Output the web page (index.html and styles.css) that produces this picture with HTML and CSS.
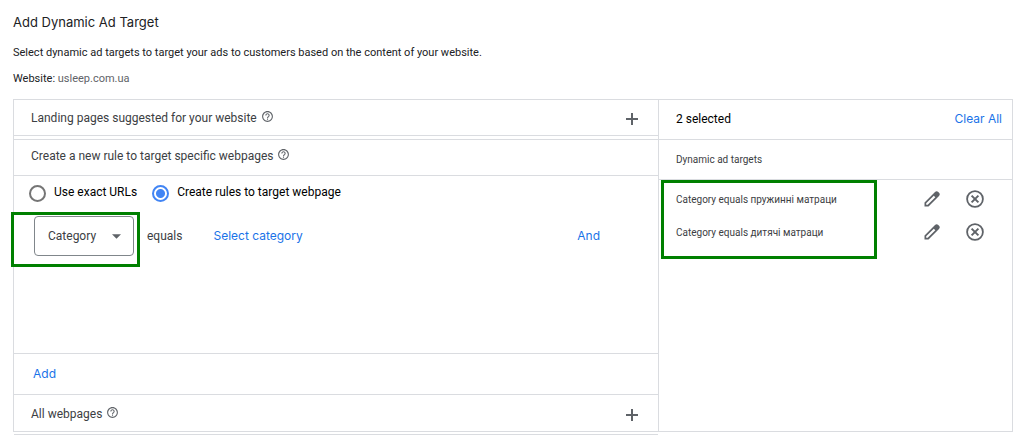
FILE: index.html
```html
<!DOCTYPE html>
<html lang="en">
<head>
<meta charset="utf-8">
<meta name="viewport" content="width=device-width, initial-scale=1">
<title>Add Dynamic Ad Target</title>
<link rel="stylesheet" href="styles.css">
</head>
<body>
<svg class="sprite" aria-hidden="true">
  <symbol id="help" viewBox="0 0 24 24"><path d="M11 18h2v-2h-2v2zm1-16C6.480 2 2 6.480 2 12s4.480 10 10 10 10-4.480 10-10S17.520 2 12 2zm0 18c-4.410 0-8-3.590-8-8s3.590-8 8-8 8 3.590 8 8-3.590 8-8 8zm0-14c-2.210 0-4 1.790-4 4h2c0-1.100.9-2 2-2s2 .9 2 2c0 2-3 1.750-3 5h2c0-2.250 3-2.500 3-5 0-2.210-1.790-4-4-4z"/></symbol>
  <symbol id="plus" viewBox="0 0 12 12"><path d="M5 0h2v5h5v2H7v5H5V7H0V5h5z"/></symbol>
  <symbol id="pencil" viewBox="0 0 16 16"><path fill-rule="evenodd" d="M11 1a2.400 2.400 0 0 1 3.300 0l.7.7a2.400 2.400 0 0 1 0 3.300L4.500 15.500H.5v-4zM9.800 4.700 2.200 12.300v1.500h1.500l7.600-7.600z"/></symbol>
  <symbol id="remove" viewBox="0 0 18 18"><circle cx="9" cy="9" r="7.900" fill="none" stroke="currentColor" stroke-width="1.800"/><path d="m5.600 5.600 6.800 6.800m0-6.800-6.800 6.800" fill="none" stroke="currentColor" stroke-width="2"/></symbol>
</svg>
<main class="page">
  <h1 class="title">Add Dynamic Ad Target</h1>
  <p class="intro">Select dynamic ad targets to target your ads to customers based on the content of your website.</p>
  <p class="intro">Website: <span class="site">usleep.com.ua</span></p>
  <div class="picker">
    <div class="sources">
      <section class="row">
        <h2 class="label">Landing pages suggested for your website</h2>
        <svg class="help"><use href="#help"/></svg>
        <button class="expand" aria-label="Expand landing pages"><svg class="plus"><use href="#plus"/></svg></button>
      </section>
      <section class="rule">
        <div class="row rule-head">
          <h2 class="label">Create a new rule to target specific webpages</h2>
          <svg class="help"><use href="#help"/></svg>
        </div>
        <div class="rule-body">
          <div class="options">
            <label class="option"><input class="radio" type="radio" name="mode"><span class="option-text">Use exact URLs</span></label>
            <label class="option"><input class="radio" type="radio" name="mode" checked><span class="option-text">Create rules to target webpage</span></label>
          </div>
          <div class="condition">
            <div class="select-wrap marked">
              <select class="select" aria-label="Condition type"><option>Category</option></select>
              <svg class="arrow" viewBox="0 0 10 5"><path d="M0 0h10L5 5z"/></svg>
            </div>
            <span class="operator">equals</span>
            <button class="action">Select category</button>
            <button class="action and">And</button>
          </div>
        </div>
        <div class="rule-footer"><button class="action">Add</button></div>
      </section>
      <section class="row all-pages">
        <h2 class="label">All webpages</h2>
        <svg class="help"><use href="#help"/></svg>
        <button class="expand" aria-label="Expand all webpages"><svg class="plus"><use href="#plus"/></svg></button>
      </section>
    </div>
    <section class="selected">
      <div class="selected-head"><h2 class="count">2 selected</h2><button class="action">Clear All</button></div>
      <h3 class="group">Dynamic ad targets</h3>
      <ul class="targets marked">
        <li class="target"><span class="target-name">Category equals пружинні матраци</span>
          <button class="tool" aria-label="Edit"><svg class="pencil"><use href="#pencil"/></svg></button>
          <button class="tool" aria-label="Remove"><svg class="remove"><use href="#remove"/></svg></button></li>
        <li class="target"><span class="target-name">Category equals дитячі матраци</span>
          <button class="tool" aria-label="Edit"><svg class="pencil"><use href="#pencil"/></svg></button>
          <button class="tool" aria-label="Remove"><svg class="remove"><use href="#remove"/></svg></button></li>
      </ul>
    </section>
  </div>
</main>
</body>
</html>
```
FILE: styles.css
```css
* { box-sizing: border-box; }
body {
  margin: 0;
  background: #fff;
  color: #202124;
  font: 12px/16px Roboto, "Liberation Sans", sans-serif;
}
h1, h2, h3, p, ul { margin: 0; padding: 0; font-weight: 400; }
ul { list-style: none; }
button {
  padding: 0;
  border: 0;
  background: none;
  font: inherit;
  cursor: pointer;
}
svg { display: block; fill: currentColor; }
.sprite { position: absolute; width: 0; height: 0; }
.page { padding: 12px 7px 12px 13px; }
.title { font: 400 13px/20px Inter, Roboto, sans-serif; }
.intro { margin-top: 10px; font-size: 11px; }
.title + .intro { margin-top: 13px; }
.site { color: #5f6368; }

.picker {
  display: grid;
  grid-template-columns: 644fr 354fr;
  margin-top: 12px;
  border: 1px solid #dadce0;
}
.sources { margin-bottom: -4px; }
.row {
  display: flex;
  align-items: center;
  height: 36px;
  padding: 0 20px 0 17px;
  border-bottom: 1px solid #dadce0;
}
.label { padding-top: 1px; font-size: 12px; color: #3c4043; }
.help { width: 13px; height: 13px; margin: 0 0 2px 4px; color: #5f6368; }
.expand { margin-left: auto; padding-top: 2px; color: #5f6368; }
.plus { width: 12px; height: 12px; }
.rule { margin-top: 3px; border-top: 1px solid #dadce0; }
.rule-head { padding-bottom: 4px; }
.rule-body { height: 177px; padding: 8px 58px 0 15px; }
.options { display: flex; gap: 15px; }
.option { display: flex; align-items: center; }
.option-text { margin: 0 0 2px 8px; color: #000; }
.radio {
  appearance: none;
  width: 17px;
  height: 17px;
  margin: 0;
  border: 2px solid #757575;
  border-radius: 50%;
}
.radio:checked {
  border-color: #4285f4;
  background: radial-gradient(circle, #4285f4 4px, transparent 5px);
}
.condition { display: flex; align-items: center; margin-top: 14px; color: #3c4043; }
.select-wrap { position: relative; width: 100px; margin-left: 5px; }
.select {
  appearance: none;
  width: 100%;
  height: 40px;
  padding: 0 24px 0 13px;
  border: 1px solid #80868b;
  border-radius: 4px;
  background: #fff;
  color: #3c4043;
  font: inherit;
}
.arrow {
  position: absolute;
  top: 18px;
  right: 13px;
  width: 9px;
  height: 5px;
  color: #5f6368;
  pointer-events: none;
}
.marked::before {
  content: "";
  position: absolute;
  border: 3px solid #008000;
  pointer-events: none;
}
.select-wrap::before { inset: -4px -6px -11px -23px; }
.operator { margin: 0 31px 0 13px; }
.action { color: #1a73e8; font: 400 12px/16px Inter, Roboto, sans-serif; }
.and { margin-left: auto; }
.rule-footer {
  display: flex;
  align-items: center;
  height: 42px;
  padding-left: 19px;
  border: solid #dadce0;
  border-width: 1px 0;
}
.all-pages { height: 40px; padding-bottom: 2px; }

.selected { border-left: 1px solid #dadce0; }
.selected-head, .group {
  display: flex;
  align-items: center;
  justify-content: space-between;
  height: 40px;
  padding: 0 10px 0 17px;
  border-bottom: 1px solid #dadce0;
}
.selected-head { padding-bottom: 2px; }
.count { font-size: 12px; color: #000; }
.group, .target-name { font-size: 10px; color: #3c4043; }
.targets { position: relative; padding: 2px 28px 0 17px; }
.targets::before { inset: 0 135px -11px 2px; }
.target { display: flex; align-items: center; height: 33px; }
.target-name { flex: 1; padding-top: 3px; }
.tool { color: #5f6368; }
.tool + .tool { margin-left: 26px; }
.pencil { width: 16px; height: 16px; }
.remove { width: 18px; height: 18px; }
```
